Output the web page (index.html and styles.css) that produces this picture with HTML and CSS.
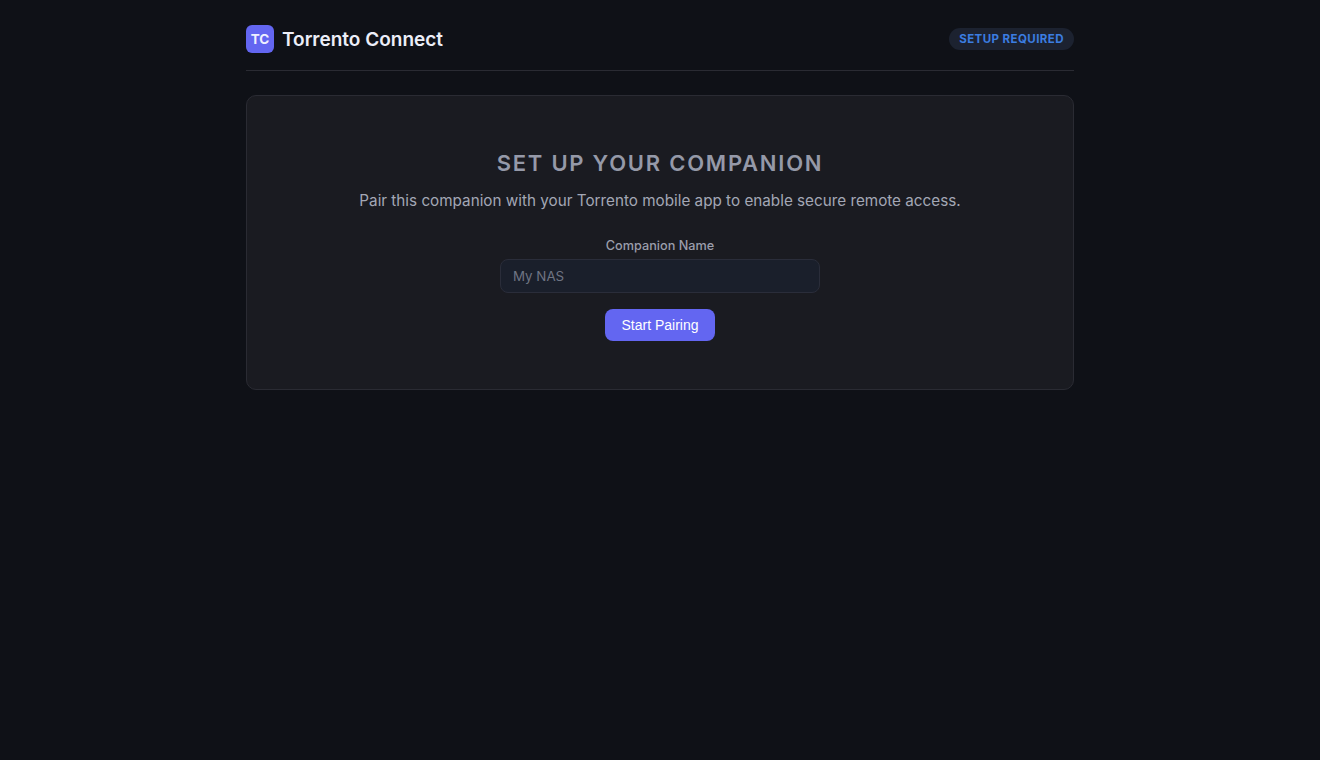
FILE: index.html
```html
<!DOCTYPE html>
<html lang="en">
<head>
<meta charset="utf-8">
<title>Torrento Connect</title>
<link rel="stylesheet" href="styles.css">
</head>
<body>
<div class="page">
  <header class="header">
    <div class="brand">
      <span class="logo">TC</span>
      <span class="brand-name">Torrento Connect</span>
    </div>
    <span class="badge">SETUP REQUIRED</span>
  </header>
  <main class="card">
    <h1 class="title">SET UP YOUR COMPANION</h1>
    <p class="subtitle">Pair this companion with your Torrento mobile app to enable secure remote access.</p>
    <div class="field">
      <label class="label" for="name">Companion Name</label>
      <input class="input" id="name" type="text" placeholder="My NAS">
    </div>
    <button class="button" type="button">Start Pairing</button>
  </main>
</div>
</body>
</html>
```

FILE: styles.css
```css
* { box-sizing: border-box; }
html, body { margin: 0; height: 100%; }
body {
  background: #0f1117;
  color: #e8e9f0;
  font-family: Inter, "Liberation Sans", sans-serif;
}
.page {
  width: 828px;
  margin: 0 auto;
  padding-top: 24px;
}
.header {
  display: flex;
  align-items: center;
  justify-content: space-between;
  height: 47px;
  padding: 1px 0 17px;
  border-bottom: 1px solid #2a2b33;
  margin-bottom: 24px;
}
.brand { display: flex; align-items: center; gap: 8px; }
.logo {
  width: 28px;
  height: 28px;
  border-radius: 6px;
  background: #6366f1;
  color: #eef0ff;
  font-size: 13.5px;
  font-weight: 700;
  display: flex;
  align-items: center;
  justify-content: center;
}
.brand-name { font-size: 19px; line-height: 28px; padding-top: 1px; font-weight: 600; color: #eceef8; }
.badge {
  height: 22px;
  padding: 0 10px;
  border-radius: 11px;
  background: #1c2230;
  color: #3b7de0;
  font-size: 11.5px;
  font-weight: 700;
  letter-spacing: 0.43px;
  display: flex;
  align-items: center;
}
.card {
  height: 295px;
  background: #1a1b21;
  border: 1px solid #2a2b33;
  border-radius: 10px;
  padding-top: 54px;
  display: flex;
  flex-direction: column;
  align-items: center;
}
.title {
  margin: 0;
  font-size: 22px;
  line-height: 27px;
  font-weight: 600;
  letter-spacing: 1.76px;
  color: #9599a8;
}
.subtitle {
  margin: 13px 0 0;
  font-size: 15.25px;
  line-height: 22px;
  color: #a3a7b5;
}
.field {
  width: 320px;
  margin-top: 26px;
  display: flex;
  flex-direction: column;
  align-items: center;
}
.label {
  font-size: 12.7px;
  line-height: 15px;
  font-weight: 500;
  color: #9a9eac;
  margin-bottom: 6px;
}
.input {
  width: 320px;
  height: 34px;
  padding: 0 12px;
  background: #1a1f2b;
  border: 1px solid #2a2d3a;
  border-radius: 8px;
  color: #e8e9f0;
  font-family: inherit;
  font-size: 13.33px;
  outline: none;
}
.input::placeholder { color: #6f7483; opacity: 1; }
.button {
  margin-top: 16px;
  width: 110px;
  height: 32px;
  border: 0;
  border-radius: 8px;
  background: #6366f1;
  color: #fff;
  font-family: "Liberation Sans", Arial, sans-serif;
  font-size: 14px;
  font-weight: 400;
}
```
